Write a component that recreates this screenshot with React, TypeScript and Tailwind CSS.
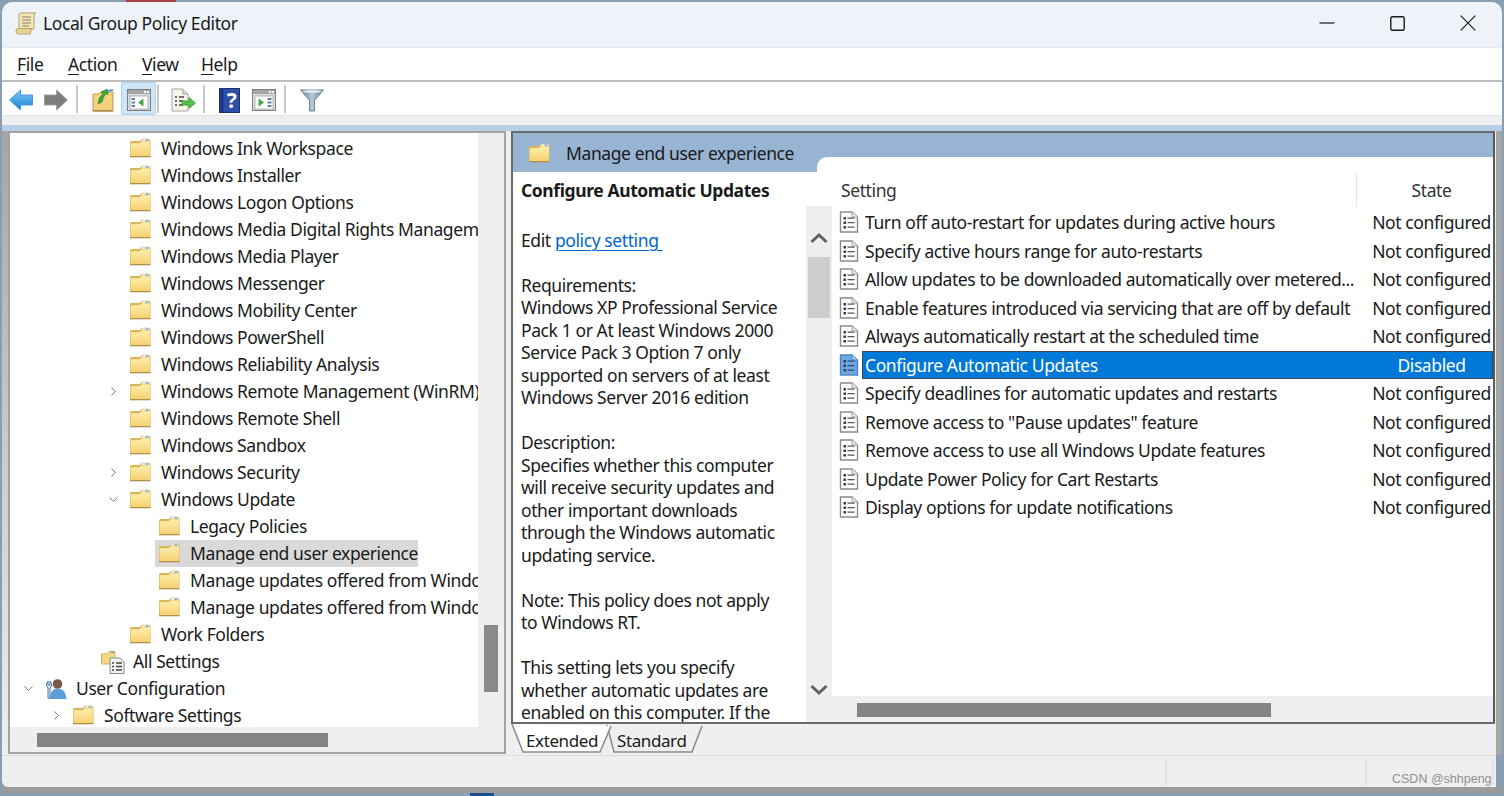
import { ChevronDown, ChevronRight } from 'lucide-react'

const treeRows = [
  { label: 'Windows Ink Workspace', indent: 120 },
  { label: 'Windows Installer', indent: 120 },
  { label: 'Windows Logon Options', indent: 120 },
  { label: 'Windows Media Digital Rights Management', indent: 120 },
  { label: 'Windows Media Player', indent: 120 },
  { label: 'Windows Messenger', indent: 120 },
  { label: 'Windows Mobility Center', indent: 120 },
  { label: 'Windows PowerShell', indent: 120 },
  { label: 'Windows Reliability Analysis', indent: 120 },
  { label: 'Windows Remote Management (WinRM)', indent: 120, arrow: 'right' },
  { label: 'Windows Remote Shell', indent: 120 },
  { label: 'Windows Sandbox', indent: 120 },
  { label: 'Windows Security', indent: 120, arrow: 'right' },
  { label: 'Windows Update', indent: 120, arrow: 'down' },
  { label: 'Legacy Policies', indent: 149 },
  { label: 'Manage end user experience', indent: 149, selected: true },
  { label: 'Manage updates offered from Windows Update', indent: 149 },
  { label: 'Manage updates offered from Windows Server Update Service', indent: 149 },
  { label: 'Work Folders', indent: 120 },
  { label: 'All Settings', indent: 91, icon: 'settings' },
  { label: 'User Configuration', indent: 35, icon: 'user', arrow: 'down' },
  { label: 'Software Settings', indent: 63, arrow: 'right' },
]

const policies = [
  ['Turn off auto-restart for updates during active hours', 'Not configured'],
  ['Specify active hours range for auto-restarts', 'Not configured'],
  ['Allow updates to be downloaded automatically over metered...', 'Not configured'],
  ['Enable features introduced via servicing that are off by default', 'Not configured'],
  ['Always automatically restart at the scheduled time', 'Not configured'],
  ['Configure Automatic Updates', 'Disabled'],
  ['Specify deadlines for automatic updates and restarts', 'Not configured'],
  ['Remove access to "Pause updates" feature', 'Not configured'],
  ['Remove access to use all Windows Update features', 'Not configured'],
  ['Update Power Policy for Cart Restarts', 'Not configured'],
  ['Display options for update notifications', 'Not configured'],
]

const description = [
  'Requirements:',
  'Windows XP Professional Service',
  'Pack 1 or At least Windows 2000',
  'Service Pack 3 Option 7 only',
  'supported on servers of at least',
  'Windows Server 2016 edition',
  '',
  'Description:',
  'Specifies whether this computer',
  'will receive security updates and',
  'other important downloads',
  'through the Windows automatic',
  'updating service.',
  '',
  'Note: This policy does not apply',
  'to Windows RT.',
  '',
  'This setting lets you specify',
  'whether automatic updates are',
  'enabled on this computer. If the',
]

function Folder({ className = '' }: { className?: string }) {
  return (
    <svg width="21" height="20" viewBox="1 0 21 20" className={className}>
      <defs>
        <linearGradient id="folderFill" x1="0" y1="0" x2="0" y2="1">
          <stop offset="0" stopColor="#ffeeb0" />
          <stop offset="1" stopColor="#f6d270" />
        </linearGradient>
      </defs>
      <path d="M1 4.5 Q1 3 2.5 3 H11 L13 .8 H20 Q21.5 .8 21.5 2 V18.8 H1 Z" fill="#dcb458" />
      <path d="M13.5 1.3 H20.5 V3.2 H12.5 Z" fill="#f4f0de" />
      <rect x="16.5" y="1.4" width="3" height="1.4" fill="#62a8dc" />
      <path d="M1.6 5.2 H10.5 L12.6 3.4 H20.9 V18 H1.6 Z" fill="url(#folderFill)" />
      <path d="M1 18 H21.5 V19.3 H1 Z" fill="#b0904c" />
    </svg>
  )
}

function PolicyDoc({ selected = false }: { selected?: boolean }) {
  const line = selected ? '#1f4f86' : '#555'
  return (
    <svg width="20" height="22" viewBox="0 0 20 22" className="shrink-0">
      <path
        d="M1.5 1 H13 L18.5 6 V21 H1.5 Z"
        fill={selected ? '#6fa8dc' : '#fff'}
        stroke={selected ? '#4a86c5' : '#8a8a8a'}
        strokeWidth="1.4"
      />
      <path d="M13 1 V6 H18.5" fill={selected ? '#a9cbea' : '#e8e8e8'} stroke={selected ? '#4a86c5' : '#a5a5a5'} />
      <rect x="4.5" y="6" width="2.5" height="2.5" fill="#2d3a58" />
      <rect x="4.5" y="10.5" width="2.5" height="2.5" fill="#2d3a58" />
      <rect x="4.5" y="15" width="2.5" height="2.5" fill="#2d3a58" />
      <path d="M8.5 7.2 H15.5 M8.5 11.7 H15.5 M8.5 16.2 H15.5" stroke={line} strokeWidth="1.3" />
    </svg>
  )
}

function TreeIcon({ kind }: { kind?: string }) {
  if (kind === 'settings') {
    return (
      <svg width="24" height="24" viewBox="0 0 24 24" className="shrink-0 mr-[8px]">
        <path d="M0.5 4 H6 L8 1.5 H14 V14 H0.5 Z" fill="#f6d987" stroke="#d1ae5c" />
        <rect x="10" y="2" width="3" height="1.3" fill="#62a8dc" />
        <path d="M9 8 H19 L23 12 V23.5 H9 Z" fill="#f4f4f4" stroke="#8a8a8a" />
        <path d="M11 13 H13 M15 13 H21 M11 16.5 H13 M15 16.5 H21 M11 20 H13 M15 20 H21" stroke="#444" strokeWidth="1.3" />
      </svg>
    )
  }
  if (kind === 'user') {
    return (
      <svg width="22" height="22" viewBox="0 0 22 22" className="shrink-0 mr-[9px]">
        <circle cx="12.5" cy="6" r="4.8" fill="#7a5a44" />
        <path d="M5 21 Q5 10.5 12.5 10.5 Q21 10.5 21.5 21 Z" fill="#5a9fd8" />
        <path d="M1.5 8 V6 L3 3 V7 H5 V3 L6.5 6 V8 L5 10 V20 Q3.2 21.5 3 20 V10 Z" fill="#dfe8f2" stroke="#3e6ea8" strokeWidth="0.9" />
      </svg>
    )
  }
  return <Folder className="shrink-0 mr-[10px] relative -top-[1px]" />
}

function TreeRow({ label, indent, arrow, selected, icon }: { label: string; indent: number; arrow?: string; selected?: boolean; icon?: string }) {
  return (
    <div className="relative h-[27px] flex items-center whitespace-nowrap" style={{ paddingLeft: indent }}>
      {selected && <div className="absolute left-[145px] top-0 w-[263px] h-full bg-[#d9d9d9]" />}
      {arrow && (
        <span className="absolute top-[6px] text-[#6e6e6e]" style={{ left: indent - 24 }}>
          {arrow === 'down' ? <ChevronDown size={15} strokeWidth={1.5} /> : <ChevronRight size={15} strokeWidth={1.5} />}
        </span>
      )}
      <span className="relative flex items-center">
        <TreeIcon kind={icon} />
        <span>{label}</span>
      </span>
    </div>
  )
}

function Sep({ className }: { className: string }) {
  return <div className={`w-[2px] h-[28px] bg-[#c9c9c9] shrink-0 -mt-[2px] ${className}`} />
}

function PaneWindowIcon({ side }: { side: 'left' | 'right' }) {
  return (
    <svg width="24" height="22" viewBox="0 0 24 22">
      <rect x="0.5" y="0.5" width="23" height="21" fill="#dcdcdc" stroke="#7e7e7e" />
      <rect x="1" y="1" width="22" height="4" fill="#a5a5a5" />
      <rect x="17" y="2" width="2" height="2" fill="#fff" />
      <rect x="20" y="2" width="2" height="2" fill="#fff" />
      <rect x="3" y="7" width="18" height="13" fill="#fff" stroke="#9a9a9a" strokeWidth="0.7" />
      {side === 'left' ? (
        <>
          <path d="M4.5 10 H8 M4.5 13.5 H8 M4.5 17 H8" stroke="#5c80b4" strokeWidth="1.8" />
          <path d="M16.5 9.5 V17.5 L11 13.5 Z" fill="#43a63e" />
        </>
      ) : (
        <>
          <path d="M15.5 10 H19.5 M15.5 13.5 H19.5 M15.5 17 H19.5" stroke="#5c80b4" strokeWidth="1.8" />
          <path d="M6.5 9.5 V17.5 L12 13.5 Z" fill="#43a63e" />
        </>
      )}
    </svg>
  )
}

function Toolbar() {
  return (
    <div className="h-[33px] bg-white flex items-center pt-[3px]">
      <svg width="24" height="22" viewBox="0 0 24 22" className="ml-[7px]">
        <defs>
          <linearGradient id="backFill" x1="0" y1="0" x2="0" y2="1">
            <stop offset="0" stopColor="#7cc8f5" />
            <stop offset="1" stopColor="#1c7fd0" />
          </linearGradient>
        </defs>
        <path d="M0.5 11 L11.5 1 V6 H23.5 V16 H11.5 V21 Z" fill="url(#backFill)" stroke="#4c9be0" strokeLinejoin="round" />
      </svg>
      <svg width="24" height="22" viewBox="0 0 24 22" className="ml-[11px]">
        <path d="M23.5 11 L12.5 1 V6 H0.5 V16 H12.5 V21 Z" fill="#7d7d7d" stroke="#a0a0a0" strokeLinejoin="round" />
      </svg>
      <Sep className="ml-[8px]" />
      <svg width="22" height="24" viewBox="0 0 22 24" className="ml-[14px]">
        <path d="M1 6 H7 L9 4 H21 V23 H1 Z" fill="#f4d27c" stroke="#b99a55" />
        <path d="M1 22 H21 V23.5 H1 Z" fill="#a98a45" />
        <path d="M6 16 Q7 8 11 6 L9 4 L15 1 L16 7 L14 5.5 Q11 9 10 14 Z" fill="#3fa535" stroke="#2c7d28" strokeWidth="0.6" />
        <path d="M15 3 L21 2" stroke="#2f8ad8" strokeWidth="1.6" />
      </svg>
      <div className="ml-[7px] -mt-[3px] w-[35px] h-[33px] bg-[#cfe6f8] border border-[#a8d4f5] rounded-[2px] flex items-center justify-center pt-[2px]">
        <PaneWindowIcon side="left" />
      </div>
      <Sep className="ml-[1px]" />
      <svg width="25" height="24" viewBox="0 0 25 24" className="ml-[12px]">
        <path d="M1 1 H12 L17 6 V23 H1 Z" fill="#f7f4e8" stroke="#a5a5a5" />
        <path d="M12 1 V6 H17" fill="#e0ddd0" stroke="#a5a5a5" />
        <path d="M4 9 H6 M8 9 H13 M4 13 H6 M8 13 H12 M4 17 H6 M8 17 H12" stroke="#444" strokeWidth="1.3" />
        <path d="M11 13 H18 V9.5 L24.5 15 L18 20.5 V17 H11 Z" fill="#55c04a" stroke="#3c9a36" strokeWidth="0.8" />
      </svg>
      <Sep className="ml-[7px]" />
      <svg width="21" height="25" viewBox="0 0 21 25" className="ml-[14px]">
        <rect x="0.5" y="0.5" width="20" height="24" fill="#2c4fa8" stroke="#1d2f70" />
        <rect x="1.5" y="1.5" width="3" height="22" fill="#1d3580" />
      </svg>
      <span className="-ml-[17px] w-[17px] text-center text-white font-bold text-[21px] leading-none relative">?</span>
      <div className="ml-[12px]">
        <PaneWindowIcon side="right" />
      </div>
      <Sep className="ml-[8px]" />
      <svg width="24" height="24" viewBox="0 0 24 24" className="ml-[14px]">
        <defs>
          <linearGradient id="filterFill" x1="0" y1="0" x2="1" y2="0">
            <stop offset="0" stopColor="#5f8199" />
            <stop offset="0.5" stopColor="#b4c8d6" />
            <stop offset="1" stopColor="#5f8199" />
          </linearGradient>
        </defs>
        <path d="M0.5 2 H23.5 L14.5 12.5 V23 H9.5 V12.5 Z" fill="url(#filterFill)" stroke="#6f8798" strokeLinejoin="round" />
        <ellipse cx="12" cy="3.5" rx="10" ry="1.5" fill="#dfe8ee" />
      </svg>
    </div>
  )
}

function MenuLabel({ first, rest, className }: { first: string; rest: string; className: string }) {
  return (
    <span className={className}>
      <span className="underline underline-offset-[3px] decoration-1">{first}</span>
      {rest}
    </span>
  )
}

export default function App() {
  return (
    <div className="relative w-[1504px] h-[796px] overflow-hidden bg-[#8a9eb1] font-['Noto_Sans',sans-serif] text-[17.5px] tracking-[-0.4px] text-[#1a1a1a] pt-[2px] pl-[2px] pr-[2px]">
      <div className="absolute left-[126px] top-0 w-[50px] h-[2px] bg-[#a3423f]" />
      <div className="absolute left-[470px] bottom-0 w-[24px] h-[3px] bg-[#1d4d8e]" />

      {/* Title bar */}
      <div className="h-[45px] bg-[#eef3fa] rounded-t-[10px] flex items-center pb-[3px]">
        <svg width="23" height="23" viewBox="0 0 23 23" className="ml-[13px]">
          <path d="M4 2.5 Q4 1 6 1 H21 Q19 1.5 19 3.5 V17 H4 Z" fill="#f5e6b8" stroke="#b9a26a" />
          <path d="M7 5 H16 M7 8 H16 M7 11 H16 M7 14 H14" stroke="#8b8064" strokeWidth="1.1" />
          <path d="M1 19 Q1 16.5 3.5 16.5 H17 Q15.5 18 15.5 22 H3.5 Q1 22 1 19 Z" fill="#e9d39a" stroke="#b9a26a" />
        </svg>
        <span className="ml-[5px]">Local Group Policy Editor</span>
        <div className="ml-auto flex items-center mr-[26px] gap-[55px]">
          <svg width="16" height="16" viewBox="0 0 16 16"><path d="M0.5 8 H15.5" stroke="#1a1a1a" strokeWidth="1.2" /></svg>
          <svg width="15" height="15" viewBox="0 0 15 15"><rect x="0.8" y="0.8" width="13.4" height="13.4" rx="1.5" fill="none" stroke="#1a1a1a" strokeWidth="1.4" /></svg>
          <svg width="16" height="16" viewBox="0 0 16 16"><path d="M0.7 0.7 L15.3 15.3 M15.3 0.7 L0.7 15.3" stroke="#1a1a1a" strokeWidth="1.2" /></svg>
        </div>
      </div>

      {/* Menu */}
      <div className="h-[35px] bg-white border-t border-[#e9e9e9] border-b-2 border-b-[#bdbdbd] flex items-center">
        <MenuLabel first="F" rest="ile" className="ml-[15px] w-[51px]" />
        <MenuLabel first="A" rest="ction" className="w-[74px]" />
        <MenuLabel first="V" rest="iew" className="w-[59px]" />
        <MenuLabel first="H" rest="elp" className="" />
      </div>

      <Toolbar />
      <div className="h-[10px] bg-[#efefef] border-t border-[#e4e4e4]" />
      <div className="h-[6px] bg-[#b5cfe8]" />

      <div className="h-[624px] flex">
        <div className="w-[6px] bg-gradient-to-b from-[#a5a5a5] to-[#efefef]" />
        <div className="flex-1 bg-[#efefef] flex">
          {/* Left tree pane */}
          <div className="w-[498px] h-[623px] border-2 border-[#a3a3a3] bg-white flex flex-col">
            <div className="flex-1 min-h-0 flex">
              <div className="w-[468px] overflow-hidden pt-[2px] relative">
                {treeRows.map((row) => (
                  <TreeRow key={row.label} {...row} />
                ))}
              </div>
              <div className="flex-1 bg-[#efefef] flex justify-center pt-[492px]">
                <div className="w-[14px] h-[67px] bg-[#8a8a8a]" />
              </div>
            </div>
            <div className="h-[25px] bg-[#efefef] pl-[27px] pt-[6px]">
              <div className="w-[291px] h-[14px] bg-[#858585]" />
            </div>
          </div>

          {/* Right details pane */}
          <div className="ml-[5px] w-[984px] flex flex-col">
            <div className="h-[593px] border-2 border-[#6b6b6b] border-r-[#5a5a5a] bg-white flex flex-col">
              <div className="relative h-[39px] bg-[#98b4d3] flex items-center pl-[16px] pt-[1px] shrink-0">
                <Folder />
                <span className="ml-[16px]">Manage end user experience</span>
                <div className="absolute left-[304px] right-0 top-[24px] bottom-0 bg-white rounded-tl-[10px]" />
              </div>
              <div className="flex-1 min-h-0 flex">
                <div className="w-[293px] overflow-hidden pl-[8px] leading-[22.5px] whitespace-nowrap">
                  <div className="pt-[7px] font-bold">Configure Automatic Updates</div>
                  <div className="h-[27.5px]" />
                  <div>
                    Edit <span className="text-[#0066cc] underline underline-offset-[3px] decoration-1">policy setting&nbsp;</span>
                  </div>
                  <div className="h-[22px]" />
                  {description.map((line, i) => (
                    <div key={i} className="h-[22.5px]">{line}</div>
                  ))}
                </div>
                <div className="w-[26px] flex flex-col pt-[34px]">
                  <div className="flex-1 bg-[#efefef] flex flex-col items-center">
                    <svg width="18" height="12" viewBox="0 0 18 12" className="mt-[26px]">
                      <path d="M1.5 10 L9 3 L16.5 10" fill="none" stroke="#606060" strokeWidth="3" />
                    </svg>
                    <div className="mt-[13px] w-[22px] h-[61px] bg-[#cdcdcd]" />
                    <svg width="18" height="12" viewBox="0 0 18 12" className="mt-auto mb-[26px]">
                      <path d="M1.5 2 L9 9 L16.5 2" fill="none" stroke="#606060" strokeWidth="3" />
                    </svg>
                  </div>
                </div>

                <div className="flex-1 min-w-0 flex flex-col">
                  <div className="h-[36px] flex shrink-0">
                    <div className="w-[524px] pl-[9px] pt-[5px] text-[#333]">Setting</div>
                    <div className="w-[1px] bg-[#e5e5e5] h-[35px]" />
                    <div className="flex-1 pl-[16px] pt-[5px] pr-[3px] text-center text-[#333]">State</div>
                  </div>
                  <div className="flex-1 min-h-0 overflow-hidden">
                    {policies.map(([name, state]) => {
                      const selected = state === 'Disabled'
                      return (
                        <div key={name} className="h-[28.5px] flex items-center pl-[7px] whitespace-nowrap">
                          <PolicyDoc selected={selected} />
                          <div className={`ml-[3px] h-full flex-1 flex items-center ${selected ? 'pl-[2px] bg-[#0078d7] text-white border border-[#3d4a57]' : 'pl-[3px]'}`}>
                            <span className="w-[507px] overflow-hidden">{name}</span>
                            <span className="w-[119px] text-center overflow-hidden">{state}</span>
                          </div>
                        </div>
                      )
                    })}
                  </div>
                  <div className="h-[26px] bg-[#efefef] shrink-0 pl-[25px] pt-[7px]">
                    <div className="w-[414px] h-[14px] bg-[#858585]" />
                  </div>
                </div>
              </div>
            </div>

            {/* Extended / Standard tabs */}
            <div className="relative h-[30px] pl-[15px] flex items-start pt-[4px] text-[17px]">
              <svg width="200" height="30" viewBox="0 0 200 30" className="absolute left-0 top-0">
                <path d="M96 1 L103 28 H181 L191 2" fill="#efefef" stroke="#8a8a8a" strokeWidth="1.5" />
                <path d="M1 0 L12 28 H89 L100 2" fill="#fff" stroke="#8a8a8a" strokeWidth="1.5" />
              </svg>
              <span className="relative w-[91px]">Extended</span>
              <span className="relative">Standard</span>
            </div>
          </div>
        </div>
        <div className="w-[6px] bg-[#a5a5a5]" />
      </div>

      {/* Status bar */}
      <div className="h-[32px] bg-[#efefef] border-t border-[#dcdcdc] flex mr-[6px] rounded-bl-[6px]">
        <div className="ml-[1163px] w-[2px] my-[2px] bg-[#e3e3e3]" />
        <div className="ml-[198px] w-[2px] my-[2px] bg-[#e3e3e3]" />
        <div className="ml-[125px] w-[2px] my-[2px] bg-[#e3e3e3]" />
      </div>
      <div className="h-[6px] bg-[#9b9b9b]" />
      <div className="absolute left-[1392px] top-[770px] font-['Liberation_Sans',sans-serif] text-[12.5px] tracking-[0px] text-[#8f8f8f]">CSDN @shhpeng</div>
    </div>
  )
}
